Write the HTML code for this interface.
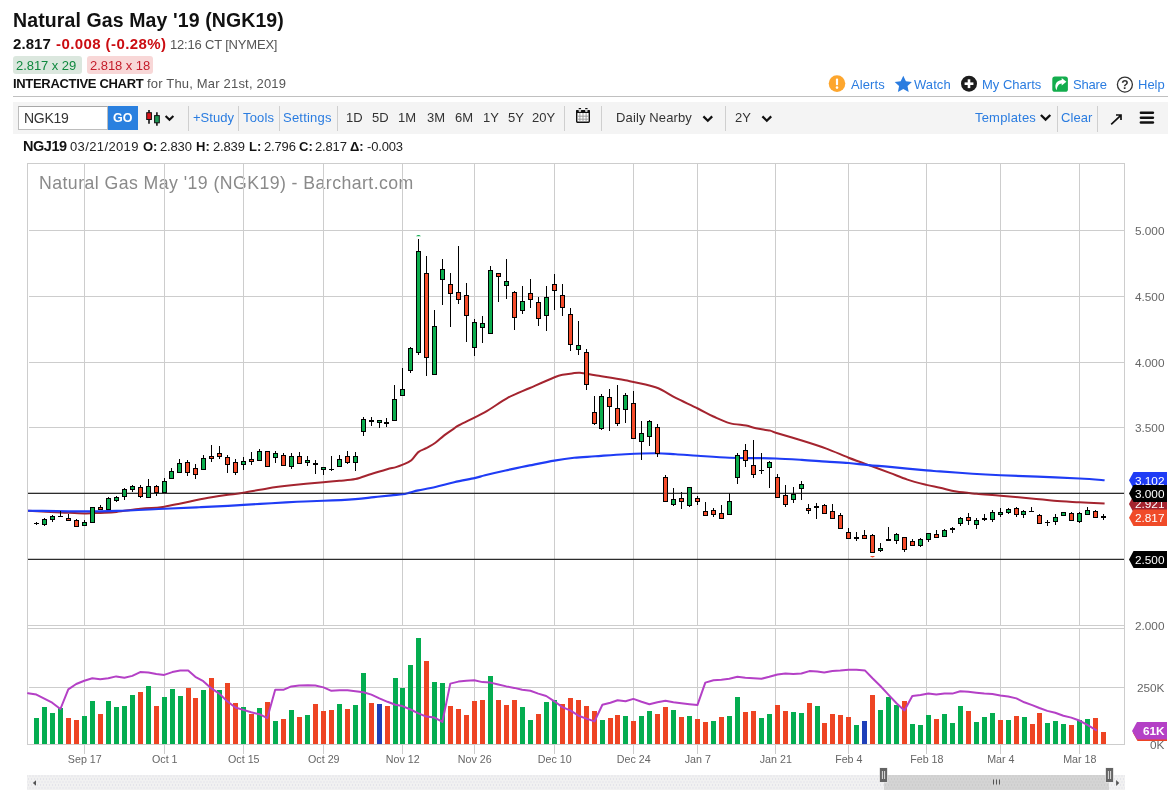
<!DOCTYPE html>
<html lang="en">
<head>
<meta charset="utf-8">
<title>Natural Gas May '19 (NGK19) - Interactive Chart</title>
<style>
html,body{margin:0;padding:0;background:#fff;}
body{width:1168px;height:795px;position:relative;overflow:hidden;font-family:"Liberation Sans",sans-serif;color:#111;}
.t{position:absolute;white-space:nowrap;line-height:1;margin:0;padding:0;will-change:transform;}
.b{font-weight:bold;}
.blue{color:#2a7ce0;}
.gray{color:#555;}
.sep{position:absolute;width:1px;background:#cfcfcf;top:106px;height:24.5px;}
.ico{position:absolute;}
</style>
</head>
<body>
<!-- header -->
<div class="t b" id="title" style="left:12.9px;top:11.21px;font-size:19.5px;letter-spacing:0.108px;">Natural Gas May '19 (NGK19)</div>
<div class="t b" id="last" style="left:12.9px;top:36.3px;font-size:15px;letter-spacing:0.071px;">2.817</div>
<div class="t b" id="chg" style="left:55.5px;top:36.3px;font-size:15px;color:#cb0d12;letter-spacing:0.412px;">-0.008 (-0.28%)</div>
<div class="t gray" id="tm" style="left:170.1px;top:38.3px;font-size:13px;letter-spacing:-0.188px;">12:16 CT [NYMEX]</div>
<div style="position:absolute;left:13px;top:56px;width:69px;height:18px;border-radius:3px;background:#dbe7de;"></div>
<div style="position:absolute;left:87px;top:56px;width:66px;height:18px;border-radius:3px;background:#f8d7d7;"></div>
<div class="t" id="bid" style="left:15.9px;top:58.9px;font-size:13px;color:#10893f;letter-spacing:-0.062px;">2.817 x 29</div>
<div class="t" id="ask" style="left:89.9px;top:58.9px;font-size:13px;color:#c41d2b;letter-spacing:-0.062px;">2.818 x 18</div>
<div class="t b" id="ic" style="left:12.9px;top:76.8px;font-size:13px;letter-spacing:-0.317px;">INTERACTIVE CHART</div>
<div class="t gray" id="icd" style="left:146.9px;top:76.8px;font-size:13px;letter-spacing:0.187px;">for Thu, Mar 21st, 2019</div>

<!-- top-right links -->
<svg class="ico" style="left:828px;top:75px" width="18" height="18" viewBox="0 0 18 18"><circle cx="9" cy="8.6" r="8.3" fill="#fda62e"/><rect x="7.9" y="3.6" width="2.2" height="6.6" rx="1" fill="#fff"/><circle cx="9" cy="12.6" r="1.3" fill="#fff"/></svg>
<div class="t blue" id="l1" style="left:851.1px;top:77.8px;font-size:13px;letter-spacing:0.094px;">Alerts</div>
<svg class="ico" style="left:894.3px;top:74.6px" width="19" height="18" viewBox="0 0 19 18"><path d="M9.3 0.8 L11.9 6.3 L17.9 7 L13.5 11.1 L14.7 17 L9.3 14.1 L3.9 17 L5.1 11.1 L0.7 7 L6.7 6.3 Z" fill="#2a7ce0"/></svg>
<div class="t blue" id="l2" style="left:914.3px;top:77.8px;font-size:13px;letter-spacing:0.068px;">Watch</div>
<svg class="ico" style="left:960px;top:75px" width="18" height="18" viewBox="0 0 18 18"><circle cx="9" cy="8.7" r="8" fill="#1d1d1d"/><rect x="4.6" y="7.4" width="8.8" height="2.6" fill="#fff"/><rect x="7.7" y="4.3" width="2.6" height="8.8" fill="#fff"/></svg>
<div class="t blue" id="l3" style="left:982.2px;top:77.8px;font-size:13px;letter-spacing:0.007px;">My Charts</div>
<svg class="ico" style="left:1052px;top:76px" width="17" height="17" viewBox="0 0 17 17"><rect x="0.3" y="0.4" width="15.6" height="15.4" rx="2.6" fill="#13ad4d"/><path d="M9.7 1.9 L14.4 5.7 L9.7 9.5 V7.4 C7 7.5 5.2 9.6 4.7 14.3 C1.8 10 3.8 4.4 9.7 4 Z" fill="#fff"/></svg>
<div class="t blue" id="l4" style="left:1073.4px;top:77.8px;font-size:13px;letter-spacing:-0.181px;">Share</div>
<svg class="ico" style="left:1116px;top:75px;will-change:transform" width="18" height="19" viewBox="0 0 18 19"><circle cx="8.9" cy="9.6" r="7.5" fill="#fff" stroke="#333" stroke-width="1.3"/><text x="8.9" y="14" font-family="Liberation Sans, sans-serif" font-size="12" font-weight="bold" fill="#333" text-anchor="middle">?</text></svg>
<div class="t blue" id="l5" style="left:1138.3px;top:77.8px;font-size:13px;letter-spacing:-0.012px;">Help</div>

<div style="position:absolute;left:13px;top:96px;width:1155px;height:1px;background:#c0c0c0;"></div>
<!-- toolbar -->
<div style="position:absolute;left:13px;top:102.3px;width:1155px;height:31.4px;background:#f4f4f4;"></div>
<div style="position:absolute;left:18px;top:106px;width:90px;height:24px;box-sizing:border-box;border:1px solid #bdbdbd;border-top-color:#a8a8a8;background:#fff;"></div>
<div class="t" id="sym" style="left:24.1px;top:110.91px;font-size:14px;color:#333;letter-spacing:-0.284px;">NGK19</div>
<div style="position:absolute;left:108px;top:106px;width:30px;height:24px;background:#2a80df;"></div>
<div class="t b" id="go" style="left:113.27px;top:111.71px;font-size:12.5px;color:#fff;letter-spacing:0px;">GO</div>
<svg class="ico" style="left:144px;top:108px" width="34" height="20" viewBox="0 0 34 20"><g stroke="#111" stroke-width="1.6"><line x1="5" y1="2.1" x2="5" y2="15.8"/><line x1="12.9" y1="4.2" x2="12.9" y2="17.7"/></g><g stroke="#111" stroke-width="1"><rect x="2.7" y="4.7" width="4.7" height="6.8" fill="#dc1419"/><rect x="10.6" y="7.6" width="4.7" height="7.2" fill="#1e9655"/></g><path d="M21.6 8 L25.5 11.8 L29.4 8" fill="none" stroke="#111" stroke-width="2.1"/></svg>
<div class="sep" style="left:188px"></div>
<div class="t blue" id="tb1" style="left:192.7px;top:110.71px;font-size:13px;letter-spacing:0.026px;">+Study</div>
<div class="sep" style="left:238px"></div>
<div class="t blue" id="tb2" style="left:243.0px;top:110.71px;font-size:13px;letter-spacing:0.188px;">Tools</div>
<div class="sep" style="left:279px"></div>
<div class="t blue" id="tb3" style="left:283.4px;top:110.71px;font-size:13px;letter-spacing:0.214px;">Settings</div>
<div class="sep" style="left:337px"></div>
<div class="t" id="p1" style="left:346.19px;top:110.71px;font-size:13px;color:#333;letter-spacing:0px;">1D</div>
<div class="t" id="p2" style="left:372.14px;top:110.71px;font-size:13px;color:#333;letter-spacing:0px;">5D</div>
<div class="t" id="p3" style="left:398.37px;top:110.71px;font-size:13px;color:#333;letter-spacing:0px;">1M</div>
<div class="t" id="p4" style="left:426.67px;top:110.71px;font-size:13px;color:#333;letter-spacing:0px;">3M</div>
<div class="t" id="p5" style="left:454.97px;top:110.71px;font-size:13px;color:#333;letter-spacing:0px;">6M</div>
<div class="t" id="p6" style="left:482.95px;top:110.71px;font-size:13px;color:#333;letter-spacing:0px;">1Y</div>
<div class="t" id="p7" style="left:507.9px;top:110.71px;font-size:13px;color:#333;letter-spacing:0px;">5Y</div>
<div class="t" id="p8" style="left:531.73px;top:110.71px;font-size:13px;color:#333;letter-spacing:0px;">20Y</div>
<div class="sep" style="left:564px"></div>
<svg class="ico" style="left:575px;top:107px" width="16" height="17" viewBox="0 0 16 17"><rect x="1.7" y="3.6" width="12.6" height="11.7" rx="1" fill="#fff" stroke="#111" stroke-width="1.4"/><rect x="1.2" y="3" width="13.6" height="3" fill="#111"/><g stroke="#999" stroke-width="0.9"><line x1="4.9" y1="6" x2="4.9" y2="14.8"/><line x1="8" y1="6" x2="8" y2="14.8"/><line x1="11.1" y1="6" x2="11.1" y2="14.8"/><line x1="2.2" y1="9.2" x2="13.8" y2="9.2"/><line x1="2.2" y1="12.2" x2="13.8" y2="12.2"/></g><rect x="3.6" y="1" width="2.5" height="4" rx="0.8" fill="#ccc"/><rect x="3.6" y="1" width="2.5" height="1" rx="0.5" fill="#111"/><rect x="10.1" y="1" width="2.5" height="4" rx="0.8" fill="#ccc"/><rect x="10.1" y="1" width="2.5" height="1" rx="0.5" fill="#111"/></svg>
<div class="sep" style="left:601px"></div>
<div class="t" id="dn" style="left:615.5px;top:110.71px;font-size:13px;color:#333;letter-spacing:0.132px;">Daily Nearby</div>
<svg class="ico" style="left:700.6px;top:114px" width="14" height="10" viewBox="0 0 14 10"><path d="M2.4 2.4 L6.8 6.8 L11.2 2.4" fill="none" stroke="#111" stroke-width="2.2"/></svg>
<div class="sep" style="left:725px"></div>
<div class="t" id="r2y" style="left:734.95px;top:110.71px;font-size:13px;color:#333;letter-spacing:0px;">2Y</div>
<svg class="ico" style="left:759.8px;top:114px" width="14" height="10" viewBox="0 0 14 10"><path d="M2.4 2.4 L6.8 6.8 L11.2 2.4" fill="none" stroke="#111" stroke-width="2.2"/></svg>
<div class="t blue" id="tpl" style="left:974.5px;top:110.71px;font-size:13px;letter-spacing:0.194px;">Templates</div>
<svg class="ico" style="left:1039px;top:112px" width="14" height="10" viewBox="0 0 14 10"><path d="M1.9 3 L6.6 7.6 L11.3 3" fill="none" stroke="#111" stroke-width="2.3"/></svg>
<div class="sep" style="left:1057px;height:25.5px"></div>
<div class="t blue" id="clr" style="left:1060.9px;top:110.71px;font-size:13px;letter-spacing:0.064px;">Clear</div>
<div class="sep" style="left:1097px;height:25.5px"></div>
<svg class="ico" style="left:1108px;top:110px" width="16" height="16" viewBox="0 0 16 16"><path d="M3.2 14.4 L12.8 5.3 M8 5 H13 V9.9" stroke="#111" stroke-width="1.7" fill="none"/></svg>
<svg class="ico" style="left:1139px;top:110px" width="16" height="15" viewBox="0 0 16 15"><g stroke="#111" stroke-width="2.5" stroke-linecap="round"><line x1="1.9" y1="2.8" x2="13.9" y2="2.8"/><line x1="1.9" y1="7.65" x2="13.9" y2="7.65"/><line x1="1.9" y1="12.4" x2="13.9" y2="12.4"/></g></svg>

<!-- info row -->
<div class="t b" id="i1" style="left:23.1px;top:139px;font-size:14.5px;color:#111;letter-spacing:-0.451px;">NGJ19</div>
<div class="t" id="i2" style="left:70.4px;top:140px;font-size:13px;color:#222;letter-spacing:0.372px;">03/21/2019</div>
<div class="t b" id="i3" style="left:142.52px;top:140px;font-size:13px;color:#111;letter-spacing:0px;">O:</div>
<div class="t" id="i4" style="left:160.3px;top:140px;font-size:13px;color:#222;letter-spacing:-0.149px;">2.830</div>
<div class="t b" id="i5" style="left:196.04px;top:140px;font-size:13px;color:#111;letter-spacing:0px;">H:</div>
<div class="t" id="i6" style="left:213.2px;top:140px;font-size:13px;color:#222;letter-spacing:-0.149px;">2.839</div>
<div class="t b" id="i7" style="left:248.71px;top:140px;font-size:13px;color:#111;letter-spacing:0px;">L:</div>
<div class="t" id="i8" style="left:264.1px;top:140px;font-size:13px;color:#222;letter-spacing:-0.169px;">2.796</div>
<div class="t b" id="i9" style="left:298.84px;top:140px;font-size:13px;color:#111;letter-spacing:0px;">C:</div>
<div class="t" id="i10" style="left:314.7px;top:140px;font-size:13px;color:#222;letter-spacing:-0.149px;">2.817</div>
<div class="t b" id="i11" style="left:350.01px;top:140px;font-size:13px;color:#111;letter-spacing:0px;">Δ:</div>
<div class="t" id="i12" style="left:367.1px;top:140px;font-size:13px;color:#222;letter-spacing:-0.163px;">-0.003</div>

<div class="t" id="ctitle" style="left:38.7px;top:174.6px;font-size:17.7px;color:#8a8a8a;letter-spacing:0.441px;">Natural Gas May '19 (NGK19) - Barchart.com</div>
<svg width="1168" height="795" viewBox="0 0 1168 795" style="position:absolute;left:0;top:0">
<g fill="none" stroke="#cdcdcd" stroke-width="1" shape-rendering="crispEdges">
<rect x="27.5" y="163.5" width="1097" height="462"/>
<rect x="27.5" y="628.5" width="1097" height="116"/>
<line x1="27.5" y1="625" x2="27.5" y2="629"/>
<line x1="1124.5" y1="625" x2="1124.5" y2="629"/>
<line x1="84.5" y1="164" x2="84.5" y2="625"/>
<line x1="84.5" y1="629" x2="84.5" y2="754"/>
<line x1="164.5" y1="164" x2="164.5" y2="625"/>
<line x1="164.5" y1="629" x2="164.5" y2="754"/>
<line x1="243.5" y1="164" x2="243.5" y2="625"/>
<line x1="243.5" y1="629" x2="243.5" y2="754"/>
<line x1="323.5" y1="164" x2="323.5" y2="625"/>
<line x1="323.5" y1="629" x2="323.5" y2="754"/>
<line x1="402.5" y1="164" x2="402.5" y2="625"/>
<line x1="402.5" y1="629" x2="402.5" y2="754"/>
<line x1="474.5" y1="164" x2="474.5" y2="625"/>
<line x1="474.5" y1="629" x2="474.5" y2="754"/>
<line x1="554.5" y1="164" x2="554.5" y2="625"/>
<line x1="554.5" y1="629" x2="554.5" y2="754"/>
<line x1="633.5" y1="164" x2="633.5" y2="625"/>
<line x1="633.5" y1="629" x2="633.5" y2="754"/>
<line x1="697.5" y1="164" x2="697.5" y2="625"/>
<line x1="697.5" y1="629" x2="697.5" y2="754"/>
<line x1="775.5" y1="164" x2="775.5" y2="625"/>
<line x1="775.5" y1="629" x2="775.5" y2="754"/>
<line x1="848.5" y1="164" x2="848.5" y2="625"/>
<line x1="848.5" y1="629" x2="848.5" y2="754"/>
<line x1="926.5" y1="164" x2="926.5" y2="625"/>
<line x1="926.5" y1="629" x2="926.5" y2="754"/>
<line x1="1000.5" y1="164" x2="1000.5" y2="625"/>
<line x1="1000.5" y1="629" x2="1000.5" y2="754"/>
<line x1="1079.5" y1="164" x2="1079.5" y2="625"/>
<line x1="1079.5" y1="629" x2="1079.5" y2="754"/>
<line x1="29" y1="230.5" x2="1124" y2="230.5"/>
<line x1="29" y1="296.5" x2="1124" y2="296.5"/>
<line x1="29" y1="362.5" x2="1124" y2="362.5"/>
<line x1="29" y1="427.5" x2="1124" y2="427.5"/>
<line x1="29" y1="687.5" x2="1124" y2="687.5"/>
</g>
<g stroke="#2c2c2c" stroke-width="1.3">
<line x1="28" y1="493.3" x2="1124" y2="493.3"/>
<line x1="28" y1="559.3" x2="1124" y2="559.3"/>
</g>
<g shape-rendering="crispEdges">
<rect x="34.0" y="718" width="5" height="26" fill="#04ad50"/>
<rect x="42.0" y="707" width="5" height="37" fill="#04ad50"/>
<rect x="50.0" y="713" width="5" height="31" fill="#04ad50"/>
<rect x="58.0" y="708" width="5" height="36" fill="#04ad50"/>
<rect x="66.0" y="718" width="5" height="26" fill="#ee4423"/>
<rect x="74.0" y="720" width="5" height="24" fill="#ee4423"/>
<rect x="82.0" y="716" width="5" height="28" fill="#04ad50"/>
<rect x="90.0" y="701" width="5" height="43" fill="#04ad50"/>
<rect x="98.0" y="714" width="5" height="30" fill="#ee4423"/>
<rect x="106.0" y="701" width="5" height="43" fill="#04ad50"/>
<rect x="114.0" y="707" width="5" height="37" fill="#04ad50"/>
<rect x="122.0" y="706" width="5" height="38" fill="#04ad50"/>
<rect x="130.0" y="695" width="5" height="49" fill="#04ad50"/>
<rect x="138.0" y="692" width="5" height="52" fill="#ee4423"/>
<rect x="146.0" y="686" width="5" height="58" fill="#04ad50"/>
<rect x="154.0" y="706" width="5" height="38" fill="#ee4423"/>
<rect x="162.0" y="697" width="5" height="47" fill="#04ad50"/>
<rect x="170.0" y="689" width="5" height="55" fill="#04ad50"/>
<rect x="178.0" y="696" width="5" height="48" fill="#04ad50"/>
<rect x="186.0" y="688" width="5" height="56" fill="#ee4423"/>
<rect x="193.0" y="698" width="5" height="46" fill="#ee4423"/>
<rect x="201.0" y="690" width="5" height="54" fill="#04ad50"/>
<rect x="209.0" y="678" width="5" height="66" fill="#ee4423"/>
<rect x="217.0" y="690" width="5" height="54" fill="#04ad50"/>
<rect x="225.0" y="683" width="5" height="61" fill="#ee4423"/>
<rect x="233.0" y="703" width="5" height="41" fill="#ee4423"/>
<rect x="241.0" y="707" width="5" height="37" fill="#04ad50"/>
<rect x="249.0" y="714" width="5" height="30" fill="#ee4423"/>
<rect x="257.0" y="708" width="5" height="36" fill="#04ad50"/>
<rect x="265.0" y="702" width="5" height="42" fill="#ee4423"/>
<rect x="273.0" y="721" width="5" height="23" fill="#04ad50"/>
<rect x="281.0" y="719" width="5" height="25" fill="#ee4423"/>
<rect x="289.0" y="710" width="5" height="34" fill="#04ad50"/>
<rect x="297.0" y="717" width="5" height="27" fill="#ee4423"/>
<rect x="305.0" y="715" width="5" height="29" fill="#04ad50"/>
<rect x="313.0" y="704" width="5" height="40" fill="#ee4423"/>
<rect x="321.0" y="711" width="5" height="33" fill="#ee4423"/>
<rect x="329.0" y="710" width="5" height="34" fill="#ee4423"/>
<rect x="337.0" y="704" width="5" height="40" fill="#04ad50"/>
<rect x="345.0" y="709" width="5" height="35" fill="#ee4423"/>
<rect x="353.0" y="705" width="5" height="39" fill="#04ad50"/>
<rect x="361.0" y="673" width="5" height="71" fill="#04ad50"/>
<rect x="369.0" y="703" width="5" height="41" fill="#ee4423"/>
<rect x="377.0" y="704" width="5" height="40" fill="#1f3fb8"/>
<rect x="385.0" y="706" width="5" height="38" fill="#ee4423"/>
<rect x="393.0" y="678" width="5" height="66" fill="#04ad50"/>
<rect x="400.0" y="688" width="5" height="56" fill="#04ad50"/>
<rect x="408.0" y="665" width="5" height="79" fill="#04ad50"/>
<rect x="416.0" y="638" width="5" height="106" fill="#04ad50"/>
<rect x="424.0" y="661" width="5" height="83" fill="#ee4423"/>
<rect x="432.0" y="682" width="5" height="62" fill="#04ad50"/>
<rect x="440.0" y="683" width="5" height="61" fill="#04ad50"/>
<rect x="448.0" y="706" width="5" height="38" fill="#ee4423"/>
<rect x="456.0" y="709" width="5" height="35" fill="#ee4423"/>
<rect x="464.0" y="715" width="5" height="29" fill="#ee4423"/>
<rect x="472.0" y="701" width="5" height="43" fill="#ee4423"/>
<rect x="480.0" y="700" width="5" height="44" fill="#ee4423"/>
<rect x="488.0" y="676" width="5" height="68" fill="#04ad50"/>
<rect x="496.0" y="700" width="5" height="44" fill="#ee4423"/>
<rect x="504.0" y="705" width="5" height="39" fill="#ee4423"/>
<rect x="512.0" y="700" width="5" height="44" fill="#ee4423"/>
<rect x="520.0" y="707" width="5" height="37" fill="#04ad50"/>
<rect x="528.0" y="720" width="5" height="24" fill="#04ad50"/>
<rect x="536.0" y="714" width="5" height="30" fill="#ee4423"/>
<rect x="544.0" y="702" width="5" height="42" fill="#04ad50"/>
<rect x="552.0" y="700" width="5" height="44" fill="#04ad50"/>
<rect x="560.0" y="704" width="5" height="40" fill="#ee4423"/>
<rect x="568.0" y="698" width="5" height="46" fill="#ee4423"/>
<rect x="576.0" y="700" width="5" height="44" fill="#ee4423"/>
<rect x="584.0" y="706" width="5" height="38" fill="#ee4423"/>
<rect x="592.0" y="711" width="5" height="33" fill="#ee4423"/>
<rect x="600.0" y="720" width="5" height="24" fill="#04ad50"/>
<rect x="608.0" y="718" width="5" height="26" fill="#ee4423"/>
<rect x="615.0" y="715" width="5" height="29" fill="#ee4423"/>
<rect x="623.0" y="716" width="5" height="28" fill="#04ad50"/>
<rect x="631.0" y="721" width="5" height="23" fill="#ee4423"/>
<rect x="639.0" y="716" width="5" height="28" fill="#04ad50"/>
<rect x="647.0" y="711" width="5" height="33" fill="#04ad50"/>
<rect x="655.0" y="714" width="5" height="30" fill="#ee4423"/>
<rect x="663.0" y="707" width="5" height="37" fill="#ee4423"/>
<rect x="671.0" y="710" width="5" height="34" fill="#04ad50"/>
<rect x="679.0" y="717" width="5" height="27" fill="#ee4423"/>
<rect x="687.0" y="716" width="5" height="28" fill="#04ad50"/>
<rect x="695.0" y="719" width="5" height="25" fill="#ee4423"/>
<rect x="703.0" y="722" width="5" height="22" fill="#ee4423"/>
<rect x="711.0" y="721" width="5" height="23" fill="#04ad50"/>
<rect x="719.0" y="717" width="5" height="27" fill="#ee4423"/>
<rect x="727.0" y="716" width="5" height="28" fill="#04ad50"/>
<rect x="735.0" y="697" width="5" height="47" fill="#04ad50"/>
<rect x="743.0" y="712" width="5" height="32" fill="#ee4423"/>
<rect x="751.0" y="711" width="5" height="33" fill="#ee4423"/>
<rect x="759.0" y="718" width="5" height="26" fill="#04ad50"/>
<rect x="767.0" y="714" width="5" height="30" fill="#04ad50"/>
<rect x="775.0" y="705" width="5" height="39" fill="#ee4423"/>
<rect x="783.0" y="711" width="5" height="33" fill="#ee4423"/>
<rect x="791.0" y="712" width="5" height="32" fill="#04ad50"/>
<rect x="799.0" y="713" width="5" height="31" fill="#04ad50"/>
<rect x="807.0" y="703" width="5" height="41" fill="#ee4423"/>
<rect x="815.0" y="706" width="5" height="38" fill="#04ad50"/>
<rect x="822.0" y="723" width="5" height="21" fill="#ee4423"/>
<rect x="830.0" y="714" width="5" height="30" fill="#ee4423"/>
<rect x="838.0" y="715" width="5" height="29" fill="#ee4423"/>
<rect x="846.0" y="717" width="5" height="27" fill="#ee4423"/>
<rect x="854.0" y="725" width="5" height="19" fill="#04ad50"/>
<rect x="862.0" y="721" width="5" height="23" fill="#1f3fb8"/>
<rect x="870.0" y="695" width="5" height="49" fill="#ee4423"/>
<rect x="878.0" y="710" width="5" height="34" fill="#04ad50"/>
<rect x="886.0" y="697" width="5" height="47" fill="#04ad50"/>
<rect x="894.0" y="705" width="5" height="39" fill="#04ad50"/>
<rect x="902.0" y="701" width="5" height="43" fill="#ee4423"/>
<rect x="910.0" y="724" width="5" height="20" fill="#04ad50"/>
<rect x="918.0" y="725" width="5" height="19" fill="#04ad50"/>
<rect x="926.0" y="715" width="5" height="29" fill="#04ad50"/>
<rect x="934.0" y="719" width="5" height="25" fill="#ee4423"/>
<rect x="942.0" y="714" width="5" height="30" fill="#04ad50"/>
<rect x="950.0" y="723" width="5" height="21" fill="#04ad50"/>
<rect x="958.0" y="706" width="5" height="38" fill="#04ad50"/>
<rect x="966.0" y="711" width="5" height="33" fill="#ee4423"/>
<rect x="974.0" y="722" width="5" height="22" fill="#04ad50"/>
<rect x="982.0" y="717" width="5" height="27" fill="#04ad50"/>
<rect x="990.0" y="713" width="5" height="31" fill="#04ad50"/>
<rect x="998.0" y="720" width="5" height="24" fill="#ee4423"/>
<rect x="1006.0" y="720" width="5" height="24" fill="#04ad50"/>
<rect x="1014.0" y="716" width="5" height="28" fill="#ee4423"/>
<rect x="1022.0" y="717" width="5" height="27" fill="#04ad50"/>
<rect x="1030.0" y="724" width="5" height="20" fill="#ee4423"/>
<rect x="1037.0" y="713" width="5" height="31" fill="#ee4423"/>
<rect x="1045.0" y="723" width="5" height="21" fill="#04ad50"/>
<rect x="1053.0" y="721" width="5" height="23" fill="#04ad50"/>
<rect x="1061.0" y="724" width="5" height="20" fill="#04ad50"/>
<rect x="1069.0" y="725" width="5" height="19" fill="#ee4423"/>
<rect x="1077.0" y="720" width="5" height="24" fill="#04ad50"/>
<rect x="1085.0" y="719" width="5" height="25" fill="#04ad50"/>
<rect x="1093.0" y="718" width="5" height="26" fill="#ee4423"/>
<rect x="1101.0" y="732" width="5" height="12" fill="#ee4423"/>
</g>
<polyline points="28.0,693.2 36.4,694.6 52.2,702.7 60.4,709.0 68.3,689.3 76.2,684.0 84.3,680.7 92.3,678.3 100.2,679.2 108.3,678.3 116.2,676.4 124.4,677.8 132.3,675.9 140.2,672.1 148.4,672.5 156.3,674.0 164.2,674.9 172.3,672.1 180.2,670.6 188.2,670.6 195.3,676.8 203.3,681.2 211.4,688.4 219.3,693.6 227.2,701.3 235.4,707.5 243.3,709.9 251.2,712.3 259.4,714.2 267.3,718.1 275.2,689.8 283.3,689.8 291.3,686.4 299.2,685.5 308.0,685.3 315.3,685.5 323.5,687.4 331.4,690.8 339.6,690.3 347.5,690.3 355.4,691.2 363.5,692.2 371.4,694.6 379.4,698.4 387.5,701.8 395.4,704.7 402.4,706.1 410.5,709.5 418.4,713.3 426.3,716.6 434.5,717.6 442.4,721.9 450.3,683.6 458.5,681.6 466.4,680.7 474.3,680.2 482.4,682.1 490.4,682.6 498.3,684.5 506.4,686.4 514.3,687.9 522.2,689.8 530.4,690.8 538.3,693.6 546.2,696.0 554.4,701.3 562.3,707.1 570.2,710.4 578.5,715.7 586.4,718.6 594.5,721.4 602.4,704.7 610.4,702.7 617.6,700.3 625.5,701.3 633.4,698.9 641.5,701.8 649.4,704.2 657.4,702.3 665.5,700.8 673.4,702.3 681.3,703.2 689.5,704.2 697.4,705.1 705.3,682.6 713.5,680.2 721.4,679.7 729.3,678.8 737.4,676.8 745.3,677.8 753.5,678.3 761.4,678.8 769.3,676.8 777.5,674.5 785.4,673.5 793.3,674.0 801.4,673.5 809.4,671.1 817.3,671.6 824.2,672.5 832.4,671.1 840.3,670.6 848.6,669.7 856.5,669.7 865.1,670.6 872.5,678.3 880.4,686.0 888.4,694.6 896.5,703.2 904.4,710.4 912.3,696.0 920.5,695.1 928.4,693.6 936.3,694.6 944.5,693.6 952.4,693.6 960.3,691.2 968.4,691.7 976.3,692.7 984.3,693.6 992.4,694.1 1000.3,695.5 1008.2,696.5 1016.4,698.4 1024.3,702.3 1032.2,705.1 1039.4,708.0 1047.3,710.9 1055.2,712.8 1063.4,715.7 1071.3,717.6 1079.2,720.5 1087.3,724.8 1096.2,730.1" fill="none" stroke="#b440c6" stroke-width="2.0" stroke-linejoin="round" stroke-linecap="round"/>
<path d="M28.0 510.8C33.4 511.1 51.1 512.0 60.5 512.4C69.9 512.8 77.8 513.3 84.5 513.4C91.2 513.5 95.1 513.1 100.4 512.9C105.7 512.6 109.8 512.6 116.5 511.9C123.2 511.2 133.8 509.5 140.5 508.8C147.2 508.1 152.4 508.1 156.4 507.8C160.4 507.5 160.7 507.5 164.5 506.8C168.3 506.1 174.3 504.8 179.5 503.7C184.7 502.6 190.2 501.4 195.5 500.3C200.8 499.2 206.2 498.1 211.6 497.2C217.0 496.3 222.7 495.5 228.0 494.8C233.3 494.1 236.8 493.9 243.4 492.8C250.0 491.7 259.4 489.6 267.4 488.4C275.4 487.1 282.0 486.3 291.3 485.3C300.6 484.3 315.4 482.9 323.4 482.2C331.4 481.4 334.0 481.3 339.3 480.8C344.6 480.3 350.1 480.2 355.4 479.1C360.7 478.0 366.0 475.6 371.3 474.0C376.6 472.4 383.1 470.3 387.2 469.2C391.3 468.1 393.4 467.9 396.0 467.1C398.6 466.4 400.2 465.8 402.8 464.7C405.4 463.6 408.8 462.4 411.4 460.3C414.0 458.2 415.7 454.2 418.3 452.1C420.9 450.0 424.0 449.4 426.8 447.9C429.6 446.3 432.5 444.9 435.4 442.8C438.2 440.8 440.8 438.0 443.9 435.6C447.0 433.2 451.6 430.2 454.2 428.4C456.8 426.6 454.4 427.7 459.5 425.0C464.6 422.3 476.6 416.9 484.6 412.4C492.6 407.9 499.8 402.2 507.3 398.1C514.9 394.0 522.0 391.5 529.9 388.0C537.8 384.5 549.1 379.4 554.6 377.2C560.1 375.0 559.7 375.3 562.6 374.7C565.5 374.1 569.1 373.7 572.0 373.4C574.9 373.1 576.1 372.4 580.0 372.7C583.9 373.0 587.7 374.0 595.2 375.3C602.8 376.6 615.2 378.3 625.3 380.3C635.3 382.3 647.1 384.4 655.5 387.3C663.9 390.2 668.7 394.4 675.7 397.9C682.8 401.4 691.5 405.4 697.8 408.5C704.1 411.6 708.1 414.1 713.4 416.5C718.7 418.9 724.0 421.6 729.5 423.1C735.0 424.6 741.7 424.8 746.1 425.6C750.5 426.5 752.0 427.4 756.0 428.2C760.0 429.0 766.8 429.9 770.1 430.6C773.4 431.4 770.4 431.1 775.7 432.7C781.0 434.3 793.3 437.9 801.8 440.5C810.2 443.1 818.6 445.7 826.4 448.6C834.2 451.5 841.5 454.9 848.6 457.7C855.7 460.4 861.8 462.6 868.7 465.1C875.6 467.6 883.3 470.5 889.8 472.9C896.2 475.3 901.3 477.6 907.4 479.6C913.5 481.6 921.0 483.5 926.4 484.9C931.8 486.2 935.0 486.6 940.0 487.7C945.0 488.8 950.2 490.6 956.3 491.6C962.4 492.6 969.0 493.1 976.4 493.8C983.8 494.5 991.6 495.0 1000.7 495.8C1009.8 496.6 1022.2 497.6 1031.1 498.4C1040.0 499.2 1045.9 500.0 1053.9 500.7C1062.0 501.4 1071.0 501.8 1079.4 502.3C1087.9 502.8 1100.4 503.4 1104.6 503.6" fill="none" stroke="#a4242f" stroke-width="2.0" stroke-linejoin="round" stroke-linecap="butt"/>
<path d="M28.0 510.7C37.4 510.8 69.8 511.4 84.5 511.4C99.2 511.4 103.2 511.3 116.5 510.9C129.8 510.5 150.7 509.4 164.5 508.8C178.3 508.2 188.6 507.7 199.2 507.2C209.8 506.7 220.6 506.3 228.0 505.9C235.4 505.5 236.3 505.3 243.5 504.9C250.7 504.4 262.5 503.7 271.4 503.2C280.3 502.7 288.3 502.2 297.0 501.8C305.7 501.4 313.7 501.2 323.4 500.8C333.1 500.4 346.9 499.7 355.3 499.1C363.8 498.5 368.1 497.7 374.1 497.1C380.1 496.5 386.5 495.9 391.2 495.4C395.9 494.9 399.4 494.8 402.5 494.3C405.6 493.8 407.4 493.2 410.0 492.6C412.6 492.0 414.1 491.3 418.3 490.4C422.5 489.5 429.4 488.4 435.4 487.0C441.4 485.6 447.7 483.7 454.2 482.2C460.7 480.7 469.5 479.2 474.6 478.1C479.7 477.0 479.8 476.6 485.0 475.3C490.2 474.0 498.2 472.1 505.6 470.5C513.0 468.9 521.5 467.0 529.6 465.4C537.7 463.8 547.0 461.9 554.4 460.6C561.8 459.3 567.3 458.5 574.1 457.8C580.9 457.1 586.7 456.9 595.2 456.3C603.7 455.7 615.2 454.7 625.3 454.2C635.3 453.7 647.1 453.2 655.5 453.2C663.9 453.2 668.7 453.8 675.7 454.2C682.8 454.6 688.8 455.2 697.8 455.8C706.8 456.4 719.8 457.4 729.5 457.8C739.2 458.2 748.3 458.0 756.0 458.1C763.7 458.2 768.1 458.2 775.7 458.5C783.3 458.8 793.3 459.4 801.8 459.9C810.2 460.4 818.6 461.1 826.4 461.6C834.2 462.1 841.5 462.4 848.6 463.0C855.7 463.6 861.8 464.5 868.7 465.1C875.6 465.8 880.2 466.0 889.8 466.9C899.4 467.8 918.0 469.6 926.4 470.4C934.8 471.1 932.3 470.8 940.0 471.4C947.7 471.9 962.4 473.0 972.5 473.7C982.6 474.4 989.9 474.8 1000.7 475.3C1011.6 475.8 1024.5 476.1 1037.6 476.6C1050.7 477.1 1068.2 477.9 1079.4 478.5C1090.6 479.1 1100.4 479.9 1104.6 480.2" fill="none" stroke="#1f3cf5" stroke-width="2.15" stroke-linejoin="round" stroke-linecap="butt"/>
<g stroke="#000" stroke-width="1" shape-rendering="crispEdges">
<line x1="36.5" y1="522" x2="36.5" y2="525"/>
<line x1="34.0" y1="523.5" x2="39.0" y2="523.5"/>
<line x1="44.5" y1="518" x2="44.5" y2="526"/>
<rect x="42.5" y="519.5" width="4" height="5" fill="#0bad4d"/>
<line x1="52.5" y1="515" x2="52.5" y2="522"/>
<rect x="50.5" y="516.5" width="4" height="3" fill="#0bad4d"/>
<line x1="60.5" y1="511" x2="60.5" y2="516"/>
<line x1="58.0" y1="516.5" x2="63.0" y2="516.5"/>
<line x1="68.5" y1="514" x2="68.5" y2="521"/>
<rect x="66.5" y="518.5" width="4" height="2" fill="#f44b2a"/>
<line x1="76.5" y1="519" x2="76.5" y2="527"/>
<rect x="74.5" y="520.5" width="4" height="6" fill="#f44b2a"/>
<line x1="84.5" y1="520" x2="84.5" y2="526"/>
<rect x="82.5" y="522.5" width="4" height="3" fill="#0bad4d"/>
<line x1="92.5" y1="507" x2="92.5" y2="523"/>
<rect x="90.5" y="507.5" width="4" height="15" fill="#0bad4d"/>
<line x1="100.5" y1="505" x2="100.5" y2="510"/>
<rect x="98.5" y="507.5" width="4" height="2" fill="#f44b2a"/>
<line x1="108.5" y1="497" x2="108.5" y2="510"/>
<rect x="106.5" y="498.5" width="4" height="11" fill="#0bad4d"/>
<line x1="116.5" y1="496" x2="116.5" y2="502"/>
<rect x="114.5" y="497.5" width="4" height="3" fill="#0bad4d"/>
<line x1="124.5" y1="488" x2="124.5" y2="500"/>
<rect x="122.5" y="489.5" width="4" height="7" fill="#0bad4d"/>
<line x1="132.5" y1="485" x2="132.5" y2="492"/>
<rect x="130.5" y="486.5" width="4" height="3" fill="#0bad4d"/>
<line x1="140.5" y1="485" x2="140.5" y2="498"/>
<rect x="138.5" y="487.5" width="4" height="9" fill="#f44b2a"/>
<line x1="148.5" y1="479" x2="148.5" y2="498"/>
<rect x="146.5" y="486.5" width="4" height="11" fill="#0bad4d"/>
<line x1="156.5" y1="485" x2="156.5" y2="496"/>
<rect x="154.5" y="486.5" width="4" height="6" fill="#f44b2a"/>
<line x1="164.5" y1="478" x2="164.5" y2="493"/>
<rect x="162.5" y="481.5" width="4" height="11" fill="#0bad4d"/>
<line x1="171.5" y1="468" x2="171.5" y2="479"/>
<rect x="169.5" y="471.5" width="4" height="7" fill="#0bad4d"/>
<line x1="179.5" y1="459" x2="179.5" y2="473"/>
<rect x="177.5" y="463.5" width="4" height="9" fill="#0bad4d"/>
<line x1="187.5" y1="460" x2="187.5" y2="476"/>
<rect x="185.5" y="462.5" width="4" height="10" fill="#f44b2a"/>
<line x1="195.5" y1="464" x2="195.5" y2="479"/>
<rect x="193.5" y="468.5" width="4" height="6" fill="#f44b2a"/>
<line x1="203.5" y1="455" x2="203.5" y2="470"/>
<rect x="201.5" y="458.5" width="4" height="11" fill="#0bad4d"/>
<line x1="211.5" y1="445" x2="211.5" y2="462"/>
<rect x="209.5" y="456.5" width="4" height="2" fill="#f44b2a"/>
<line x1="219.5" y1="446" x2="219.5" y2="459"/>
<rect x="217.5" y="453.5" width="4" height="3" fill="#f44b2a"/>
<line x1="227.5" y1="455" x2="227.5" y2="473"/>
<rect x="225.5" y="457.5" width="4" height="7" fill="#f44b2a"/>
<line x1="235.5" y1="459" x2="235.5" y2="475"/>
<rect x="233.5" y="462.5" width="4" height="10" fill="#f44b2a"/>
<line x1="243.5" y1="457" x2="243.5" y2="470"/>
<rect x="241.5" y="461.5" width="4" height="3" fill="#0bad4d"/>
<line x1="251.5" y1="452" x2="251.5" y2="465"/>
<rect x="249.5" y="459.5" width="4" height="2" fill="#f44b2a"/>
<line x1="259.5" y1="449" x2="259.5" y2="461"/>
<rect x="257.5" y="451.5" width="4" height="9" fill="#0bad4d"/>
<line x1="267.5" y1="451" x2="267.5" y2="467"/>
<rect x="265.5" y="451.5" width="4" height="15" fill="#f44b2a"/>
<line x1="275.5" y1="451" x2="275.5" y2="463"/>
<rect x="273.5" y="453.5" width="4" height="4" fill="#0bad4d"/>
<line x1="283.5" y1="453" x2="283.5" y2="466"/>
<rect x="281.5" y="455.5" width="4" height="10" fill="#f44b2a"/>
<line x1="291.5" y1="453" x2="291.5" y2="469"/>
<rect x="289.5" y="456.5" width="4" height="10" fill="#0bad4d"/>
<line x1="299.5" y1="452" x2="299.5" y2="464"/>
<rect x="297.5" y="456.5" width="4" height="7" fill="#f44b2a"/>
<line x1="307.5" y1="456" x2="307.5" y2="466"/>
<rect x="305.5" y="460.5" width="4" height="2" fill="#0bad4d"/>
<line x1="315.5" y1="460" x2="315.5" y2="474"/>
<rect x="313.0" y="463" width="5" height="2" fill="#000" stroke="none"/>
<line x1="323.5" y1="468" x2="323.5" y2="475"/>
<rect x="321.5" y="467.5" width="4" height="2" fill="#0bad4d"/>
<line x1="331.5" y1="456" x2="331.5" y2="471"/>
<line x1="329.0" y1="469.5" x2="334.0" y2="469.5"/>
<line x1="339.5" y1="455" x2="339.5" y2="466"/>
<rect x="337.5" y="459.5" width="4" height="7" fill="#0bad4d"/>
<line x1="347.5" y1="451" x2="347.5" y2="464"/>
<rect x="345.5" y="456.5" width="4" height="6" fill="#f44b2a"/>
<line x1="355.5" y1="452" x2="355.5" y2="471"/>
<rect x="353.5" y="456.5" width="4" height="6" fill="#0bad4d"/>
<line x1="363.5" y1="417" x2="363.5" y2="436"/>
<rect x="361.5" y="419.5" width="4" height="12" fill="#0bad4d"/>
<line x1="371.5" y1="417" x2="371.5" y2="426"/>
<rect x="369.0" y="420" width="5" height="2" fill="#000" stroke="none"/>
<line x1="379.5" y1="420" x2="379.5" y2="428"/>
<rect x="377.5" y="420.5" width="4" height="2" fill="#0bad4d"/>
<line x1="386.5" y1="418" x2="386.5" y2="427"/>
<rect x="384.0" y="422" width="5" height="2" fill="#000" stroke="none"/>
<line x1="394.5" y1="385" x2="394.5" y2="420"/>
<rect x="392.5" y="399.5" width="4" height="21" fill="#0bad4d"/>
<line x1="402.5" y1="368" x2="402.5" y2="396"/>
<rect x="400.5" y="389.5" width="4" height="6" fill="#0bad4d"/>
<line x1="410.5" y1="347" x2="410.5" y2="373"/>
<rect x="408.5" y="348.5" width="4" height="22" fill="#0bad4d"/>
<line x1="418.5" y1="239" x2="418.5" y2="355"/>
<rect x="416.5" y="251.5" width="4" height="101" fill="#0bad4d"/>
<line x1="426.5" y1="256" x2="426.5" y2="376"/>
<rect x="424.5" y="273.5" width="4" height="84" fill="#f44b2a"/>
<line x1="434.5" y1="310" x2="434.5" y2="374"/>
<rect x="432.5" y="326.5" width="4" height="48" fill="#0bad4d"/>
<line x1="442.5" y1="259" x2="442.5" y2="305"/>
<rect x="440.5" y="269.5" width="4" height="10" fill="#0bad4d"/>
<line x1="450.5" y1="273" x2="450.5" y2="327"/>
<rect x="448.5" y="284.5" width="4" height="9" fill="#f44b2a"/>
<line x1="458.5" y1="246" x2="458.5" y2="304"/>
<rect x="456.5" y="292.5" width="4" height="7" fill="#f44b2a"/>
<line x1="466.5" y1="283" x2="466.5" y2="342"/>
<rect x="464.5" y="295.5" width="4" height="20" fill="#f44b2a"/>
<line x1="474.5" y1="319" x2="474.5" y2="356"/>
<rect x="472.5" y="322.5" width="4" height="25" fill="#0bad4d"/>
<line x1="482.5" y1="316" x2="482.5" y2="343"/>
<rect x="480.5" y="323.5" width="4" height="4" fill="#0bad4d"/>
<line x1="490.5" y1="266" x2="490.5" y2="333"/>
<rect x="488.5" y="270.5" width="4" height="63" fill="#0bad4d"/>
<line x1="498.5" y1="273" x2="498.5" y2="302"/>
<rect x="496.5" y="273.5" width="4" height="3" fill="#f44b2a"/>
<line x1="506.5" y1="259" x2="506.5" y2="299"/>
<rect x="504.5" y="281.5" width="4" height="4" fill="#0bad4d"/>
<line x1="514.5" y1="291" x2="514.5" y2="330"/>
<rect x="512.5" y="292.5" width="4" height="25" fill="#f44b2a"/>
<line x1="522.5" y1="286" x2="522.5" y2="314"/>
<rect x="520.5" y="301.5" width="4" height="9" fill="#0bad4d"/>
<line x1="530.5" y1="279" x2="530.5" y2="308"/>
<rect x="528.5" y="293.5" width="4" height="6" fill="#f44b2a"/>
<line x1="538.5" y1="297" x2="538.5" y2="326"/>
<rect x="536.5" y="302.5" width="4" height="16" fill="#f44b2a"/>
<line x1="546.5" y1="286" x2="546.5" y2="331"/>
<rect x="544.5" y="297.5" width="4" height="18" fill="#0bad4d"/>
<line x1="554.5" y1="274" x2="554.5" y2="310"/>
<rect x="552.5" y="284.5" width="4" height="6" fill="#f44b2a"/>
<line x1="562.5" y1="284" x2="562.5" y2="316"/>
<rect x="560.5" y="295.5" width="4" height="12" fill="#f44b2a"/>
<line x1="570.5" y1="308" x2="570.5" y2="351"/>
<rect x="568.5" y="314.5" width="4" height="30" fill="#f44b2a"/>
<line x1="578.5" y1="321" x2="578.5" y2="355"/>
<rect x="576.5" y="345.5" width="4" height="4" fill="#0bad4d"/>
<line x1="586.5" y1="349" x2="586.5" y2="390"/>
<rect x="584.5" y="352.5" width="4" height="32" fill="#f44b2a"/>
<line x1="594.5" y1="396" x2="594.5" y2="425"/>
<rect x="592.5" y="412.5" width="4" height="11" fill="#f44b2a"/>
<line x1="601.5" y1="394" x2="601.5" y2="430"/>
<rect x="599.5" y="396.5" width="4" height="32" fill="#0bad4d"/>
<line x1="609.5" y1="389" x2="609.5" y2="431"/>
<rect x="607.5" y="397.5" width="4" height="9" fill="#f44b2a"/>
<line x1="617.5" y1="385" x2="617.5" y2="426"/>
<rect x="615.5" y="408.5" width="4" height="15" fill="#f44b2a"/>
<line x1="625.5" y1="393" x2="625.5" y2="423"/>
<rect x="623.5" y="395.5" width="4" height="14" fill="#0bad4d"/>
<line x1="633.5" y1="391" x2="633.5" y2="439"/>
<rect x="631.5" y="403.5" width="4" height="35" fill="#f44b2a"/>
<line x1="641.5" y1="421" x2="641.5" y2="460"/>
<rect x="639.5" y="433.5" width="4" height="8" fill="#0bad4d"/>
<line x1="649.5" y1="420" x2="649.5" y2="446"/>
<rect x="647.5" y="421.5" width="4" height="15" fill="#0bad4d"/>
<line x1="657.5" y1="424" x2="657.5" y2="457"/>
<rect x="655.5" y="427.5" width="4" height="26" fill="#f44b2a"/>
<line x1="665.5" y1="475" x2="665.5" y2="502"/>
<rect x="663.5" y="477.5" width="4" height="24" fill="#f44b2a"/>
<line x1="673.5" y1="488" x2="673.5" y2="506"/>
<rect x="671.5" y="499.5" width="4" height="5" fill="#0bad4d"/>
<line x1="681.5" y1="492" x2="681.5" y2="509"/>
<rect x="679.5" y="498.5" width="4" height="3" fill="#f44b2a"/>
<line x1="689.5" y1="487" x2="689.5" y2="507"/>
<rect x="687.5" y="487.5" width="4" height="18" fill="#0bad4d"/>
<line x1="697.5" y1="496" x2="697.5" y2="505"/>
<rect x="695.5" y="498.5" width="4" height="3" fill="#f44b2a"/>
<line x1="705.5" y1="502" x2="705.5" y2="516"/>
<rect x="703.5" y="511.5" width="4" height="4" fill="#f44b2a"/>
<line x1="713.5" y1="508" x2="713.5" y2="517"/>
<rect x="711.5" y="510.5" width="4" height="4" fill="#f44b2a"/>
<line x1="721.5" y1="505" x2="721.5" y2="519"/>
<rect x="719.5" y="513.5" width="4" height="5" fill="#f44b2a"/>
<line x1="729.5" y1="493" x2="729.5" y2="514"/>
<rect x="727.5" y="501.5" width="4" height="13" fill="#0bad4d"/>
<line x1="737.5" y1="453" x2="737.5" y2="484"/>
<rect x="735.5" y="455.5" width="4" height="22" fill="#0bad4d"/>
<line x1="745.5" y1="444" x2="745.5" y2="467"/>
<rect x="743.5" y="450.5" width="4" height="10" fill="#f44b2a"/>
<line x1="753.5" y1="440" x2="753.5" y2="478"/>
<rect x="751.5" y="465.5" width="4" height="9" fill="#f44b2a"/>
<line x1="761.5" y1="453" x2="761.5" y2="474"/>
<line x1="759.0" y1="470.5" x2="764.0" y2="470.5"/>
<line x1="769.5" y1="461" x2="769.5" y2="488"/>
<rect x="767.5" y="462.5" width="4" height="5" fill="#0bad4d"/>
<line x1="777.5" y1="474" x2="777.5" y2="498"/>
<rect x="775.5" y="477.5" width="4" height="20" fill="#f44b2a"/>
<line x1="785.5" y1="485" x2="785.5" y2="507"/>
<rect x="783.5" y="495.5" width="4" height="9" fill="#f44b2a"/>
<line x1="793.5" y1="487" x2="793.5" y2="503"/>
<rect x="791.5" y="494.5" width="4" height="5" fill="#0bad4d"/>
<line x1="801.5" y1="481" x2="801.5" y2="500"/>
<rect x="799.5" y="484.5" width="4" height="4" fill="#0bad4d"/>
<line x1="808.5" y1="504" x2="808.5" y2="514"/>
<rect x="806.5" y="508.5" width="4" height="2" fill="#f44b2a"/>
<line x1="816.5" y1="503" x2="816.5" y2="519"/>
<rect x="814.0" y="506" width="5" height="2" fill="#000" stroke="none"/>
<line x1="824.5" y1="504" x2="824.5" y2="513"/>
<rect x="822.5" y="505.5" width="4" height="8" fill="#f44b2a"/>
<line x1="832.5" y1="504" x2="832.5" y2="518"/>
<rect x="830.5" y="511.5" width="4" height="7" fill="#f44b2a"/>
<line x1="840.5" y1="513" x2="840.5" y2="529"/>
<rect x="838.5" y="515.5" width="4" height="13" fill="#f44b2a"/>
<line x1="848.5" y1="528" x2="848.5" y2="538"/>
<rect x="846.5" y="532.5" width="4" height="6" fill="#f44b2a"/>
<line x1="856.5" y1="532" x2="856.5" y2="541"/>
<rect x="854.0" y="537" width="5" height="2" fill="#000" stroke="none"/>
<line x1="864.5" y1="530" x2="864.5" y2="538"/>
<rect x="862.5" y="535.5" width="4" height="3" fill="#f44b2a"/>
<line x1="872.5" y1="534" x2="872.5" y2="553"/>
<rect x="870.5" y="535.5" width="4" height="17" fill="#f44b2a"/>
<line x1="880.5" y1="543" x2="880.5" y2="552"/>
<rect x="878.5" y="548.5" width="4" height="2" fill="#0bad4d"/>
<line x1="888.5" y1="527" x2="888.5" y2="540"/>
<rect x="886.0" y="539" width="5" height="2" fill="#000" stroke="none"/>
<line x1="896.5" y1="533" x2="896.5" y2="544"/>
<rect x="894.5" y="534.5" width="4" height="6" fill="#0bad4d"/>
<line x1="904.5" y1="537" x2="904.5" y2="552"/>
<rect x="902.5" y="537.5" width="4" height="12" fill="#f44b2a"/>
<line x1="912.5" y1="539" x2="912.5" y2="546"/>
<rect x="910.5" y="541.5" width="4" height="4" fill="#f44b2a"/>
<line x1="920.5" y1="538" x2="920.5" y2="547"/>
<rect x="918.5" y="539.5" width="4" height="6" fill="#0bad4d"/>
<line x1="928.5" y1="533" x2="928.5" y2="542"/>
<rect x="926.5" y="533.5" width="4" height="6" fill="#0bad4d"/>
<line x1="936.5" y1="530" x2="936.5" y2="538"/>
<rect x="934.5" y="534.5" width="4" height="3" fill="#f44b2a"/>
<line x1="944.5" y1="529" x2="944.5" y2="537"/>
<rect x="942.5" y="530.5" width="4" height="6" fill="#0bad4d"/>
<line x1="952.5" y1="527" x2="952.5" y2="533"/>
<rect x="950.0" y="528" width="5" height="2" fill="#000" stroke="none"/>
<line x1="960.5" y1="517" x2="960.5" y2="526"/>
<rect x="958.5" y="518.5" width="4" height="5" fill="#0bad4d"/>
<line x1="968.5" y1="513" x2="968.5" y2="525"/>
<rect x="966.5" y="517.5" width="4" height="3" fill="#f44b2a"/>
<line x1="976.5" y1="518" x2="976.5" y2="529"/>
<rect x="974.5" y="520.5" width="4" height="4" fill="#0bad4d"/>
<line x1="984.5" y1="514" x2="984.5" y2="521"/>
<rect x="982.0" y="518" width="5" height="2" fill="#000" stroke="none"/>
<line x1="992.5" y1="510" x2="992.5" y2="522"/>
<rect x="990.5" y="512.5" width="4" height="7" fill="#0bad4d"/>
<line x1="1000.5" y1="508" x2="1000.5" y2="517"/>
<rect x="998.5" y="512.5" width="4" height="2" fill="#0bad4d"/>
<line x1="1008.5" y1="508" x2="1008.5" y2="514"/>
<rect x="1006.5" y="509.5" width="4" height="3" fill="#0bad4d"/>
<line x1="1016.5" y1="507" x2="1016.5" y2="517"/>
<rect x="1014.5" y="508.5" width="4" height="6" fill="#f44b2a"/>
<line x1="1023.5" y1="510" x2="1023.5" y2="518"/>
<rect x="1021.5" y="511.5" width="4" height="3" fill="#0bad4d"/>
<line x1="1031.5" y1="507" x2="1031.5" y2="512"/>
<line x1="1029.0" y1="511.5" x2="1034.0" y2="511.5"/>
<line x1="1039.5" y1="514" x2="1039.5" y2="523"/>
<rect x="1037.5" y="515.5" width="4" height="8" fill="#f44b2a"/>
<line x1="1047.5" y1="520" x2="1047.5" y2="526"/>
<line x1="1045.0" y1="522.5" x2="1050.0" y2="522.5"/>
<line x1="1055.5" y1="514" x2="1055.5" y2="525"/>
<rect x="1053.5" y="517.5" width="4" height="4" fill="#0bad4d"/>
<line x1="1063.5" y1="512" x2="1063.5" y2="515"/>
<rect x="1061.5" y="512.5" width="4" height="3" fill="#0bad4d"/>
<line x1="1071.5" y1="512" x2="1071.5" y2="521"/>
<rect x="1069.5" y="513.5" width="4" height="7" fill="#f44b2a"/>
<line x1="1079.5" y1="512" x2="1079.5" y2="523"/>
<rect x="1077.5" y="513.5" width="4" height="8" fill="#0bad4d"/>
<line x1="1087.5" y1="507" x2="1087.5" y2="514"/>
<rect x="1085.5" y="510.5" width="4" height="4" fill="#0bad4d"/>
<line x1="1095.5" y1="510" x2="1095.5" y2="518"/>
<rect x="1093.5" y="511.5" width="4" height="6" fill="#f44b2a"/>
<line x1="1103.5" y1="514" x2="1103.5" y2="520"/>
<rect x="1101.0" y="516" width="5" height="2" fill="#000" stroke="none"/>
</g>
<line x1="28" y1="493.3" x2="1124" y2="493.3" stroke="#2c2c2c" stroke-width="1.3" opacity="0.28"/>
<path d="M416 236.2 h5 q-2.5 -2.6 -5 0z" fill="#0bad4d"/>
<path d="M870 556.1 h5 q-2.5 2.8 -5 0z" fill="#f44b2a"/>
<g font-family="Liberation Sans, sans-serif">
<path d="M1129 480.2 L1133.5 471.95 H1167 V488.45 H1133.5 Z" fill="#1f3cf5"/><text x="1164.5" y="484.5" fill="#fff" font-size="11.8" text-anchor="end">3.102</text>
<path d="M1129 504 L1133.5 495.5 H1167 V512.5 H1133.5 Z" fill="#a4242f"/><text x="1164.5" y="508.3" fill="#fff" font-size="11.8" text-anchor="end">2.921</text>
<path d="M1129 493.5 L1133.5 485.0 H1167 V502.0 H1133.5 Z" fill="#000"/><text x="1164.5" y="497.8" fill="#fff" font-size="11.8" text-anchor="end">3.000</text>
<path d="M1129 517.7 L1133.5 509.45000000000005 H1167 V525.95 H1133.5 Z" fill="#f04b28"/><text x="1164.5" y="522.0" fill="#fff" font-size="11.8" text-anchor="end">2.817</text>
<path d="M1129 559.4 L1133.5 550.9 H1167 V567.9 H1133.5 Z" fill="#000"/><text x="1164.5" y="563.6999999999999" fill="#fff" font-size="11.8" text-anchor="end">2.500</text>
<text x="1164.5" y="749" fill="#666" font-size="11.8" text-anchor="end">0K</text>
<path d="M1133 733 L1137.5 724.5 H1167 V741 H1137.5 Z" fill="#ee4423"/>
<path d="M1132 731 L1137 722 H1167 V739.5 H1137 Z" fill="#b440c6"/>
<text x="1164.6" y="734.6" fill="#fff" font-size="11.8" font-weight="bold" text-anchor="end">61K</text>
<text x="1164.5" y="235.2" fill="#666" font-size="11.8" text-anchor="end">5.000</text>
<text x="1164.5" y="301.0" fill="#666" font-size="11.8" text-anchor="end">4.500</text>
<text x="1164.5" y="367.0" fill="#666" font-size="11.8" text-anchor="end">4.000</text>
<text x="1164.5" y="432.2" fill="#666" font-size="11.8" text-anchor="end">3.500</text>
<text x="1164.5" y="629.7" fill="#666" font-size="11.8" text-anchor="end">2.000</text>
<text x="1164.5" y="692.0" fill="#666" font-size="11.8" text-anchor="end">250K</text>
<text x="84.8" y="762.6" fill="#666" font-size="10.7" text-anchor="middle">Sep 17</text>
<text x="164.8" y="762.6" fill="#666" font-size="10.7" text-anchor="middle">Oct 1</text>
<text x="243.8" y="762.6" fill="#666" font-size="10.7" text-anchor="middle">Oct 15</text>
<text x="323.8" y="762.6" fill="#666" font-size="10.7" text-anchor="middle">Oct 29</text>
<text x="402.8" y="762.6" fill="#666" font-size="10.7" text-anchor="middle">Nov 12</text>
<text x="474.8" y="762.6" fill="#666" font-size="10.7" text-anchor="middle">Nov 26</text>
<text x="554.8" y="762.6" fill="#666" font-size="10.7" text-anchor="middle">Dec 10</text>
<text x="633.8" y="762.6" fill="#666" font-size="10.7" text-anchor="middle">Dec 24</text>
<text x="697.8" y="762.6" fill="#666" font-size="10.7" text-anchor="middle">Jan 7</text>
<text x="775.8" y="762.6" fill="#666" font-size="10.7" text-anchor="middle">Jan 21</text>
<text x="848.8" y="762.6" fill="#666" font-size="10.7" text-anchor="middle">Feb 4</text>
<text x="926.8" y="762.6" fill="#666" font-size="10.7" text-anchor="middle">Feb 18</text>
<text x="1000.8" y="762.6" fill="#666" font-size="10.7" text-anchor="middle">Mar 4</text>
<text x="1079.8" y="762.6" fill="#666" font-size="10.7" text-anchor="middle">Mar 18</text>
</g>
</svg>

<!-- scrollbar -->
<div style="position:absolute;left:27px;top:775px;width:1098px;height:15px;background-color:#f1f1f1;background-image:radial-gradient(circle,#e4e4ea 0.5px,rgba(0,0,0,0) 0.8px),radial-gradient(circle,#e4e4ea 0.5px,rgba(0,0,0,0) 0.8px);background-size:3px 6px;background-position:0 1px,1.5px 4px;"></div>
<div style="position:absolute;left:883.5px;top:775px;width:225.5px;height:15px;background-color:#d4d4d4;background-image:radial-gradient(circle,#cbcbcb 0.5px,rgba(0,0,0,0) 0.8px),radial-gradient(circle,#cbcbcb 0.5px,rgba(0,0,0,0) 0.8px);background-size:3px 6px;background-position:0 1px,1.5px 4px;"></div>
<svg class="ico" style="left:0;top:760px" width="1168" height="35" viewBox="0 0 1168 35">
<path d="M36 20.3 L32.9 23 L36 25.7 Z" fill="#555"/>
<path d="M1116.1 20.1 L1119.2 23 L1116.1 25.9 Z" fill="#555"/>
<rect x="879.4" y="7.5" width="8.2" height="15" fill="#eee"/><rect x="879.9" y="8" width="7.2" height="14" fill="#646464"/><rect x="881.9" y="11" width="1" height="8" fill="#ddd"/><rect x="884.1" y="11" width="1" height="8" fill="#ddd"/>
<rect x="1105.4" y="7.5" width="8.2" height="15" fill="#eee"/><rect x="1105.9" y="8" width="7.2" height="14" fill="#646464"/><rect x="1107.9" y="11" width="1" height="8" fill="#ddd"/><rect x="1110.1" y="11" width="1" height="8" fill="#ddd"/>
<g fill="#555"><rect x="993" y="19.5" width="1" height="5"/><rect x="996" y="19.5" width="1" height="5"/><rect x="999" y="19.5" width="1" height="5"/></g>
</svg>
</body>
</html>
